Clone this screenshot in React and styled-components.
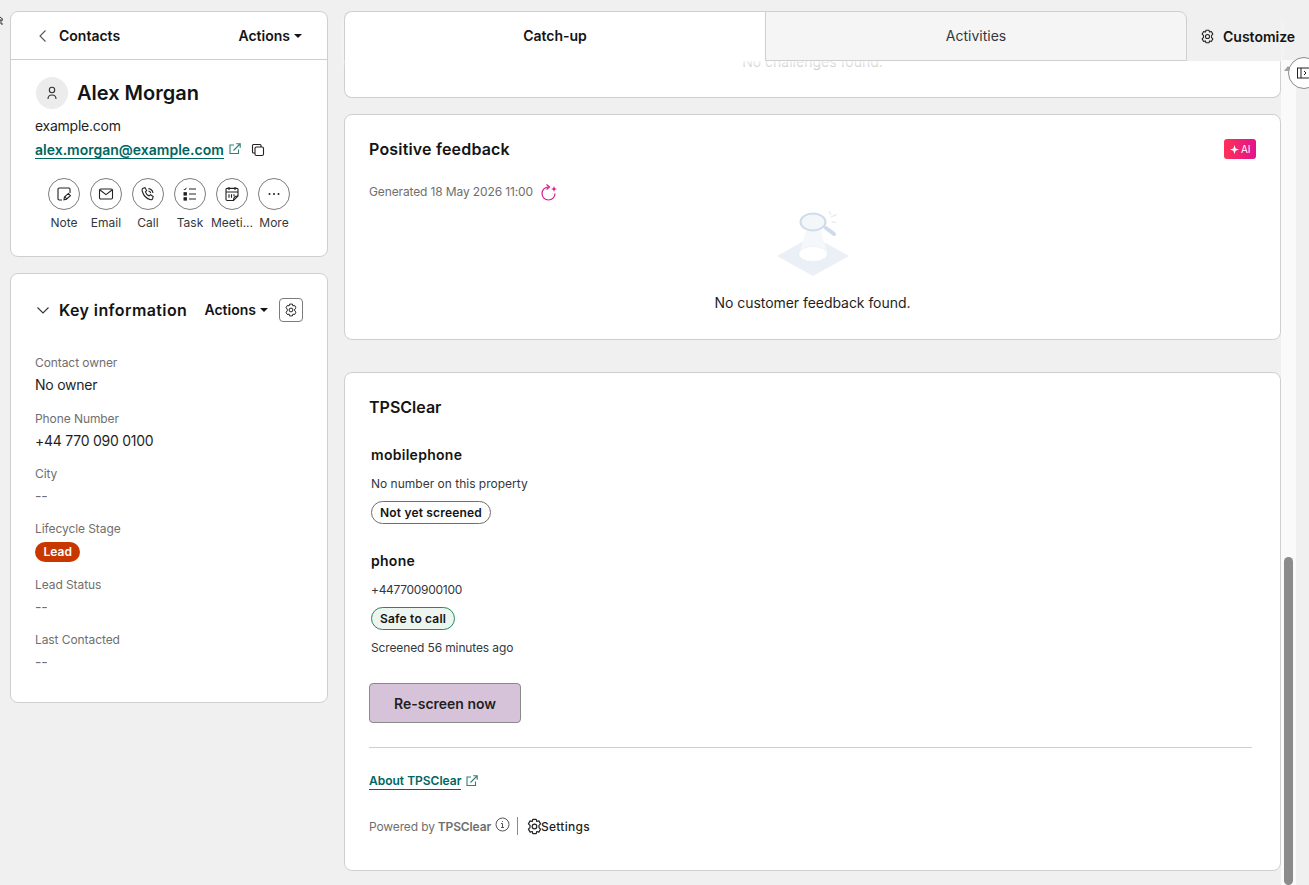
import React from 'react';
import styled, { createGlobalStyle } from 'styled-components';

const GlobalStyle = createGlobalStyle`
  html, body {
    margin: 0;
    padding: 0;
    height: 100%;
    overflow: hidden;
    background: #f0f0f0;
  }
  body {
    font-family: 'Inter', 'Open Sans', sans-serif;
    color: #1f1f1f;
  }
`;

const Page = styled.div`
  position: relative;
  display: flex;
  gap: 16px;
  width: 1309px;
  height: 885px;
  padding: 11px 0 0 10px;
  box-sizing: border-box;
  overflow: hidden;
`;

const Sidebar = styled.aside`
  display: flex;
  flex-direction: column;
  gap: 16px;
  width: 318px;
  flex-shrink: 0;
`;

const Panel = styled.section`
  background: #fff;
  border: 1px solid #cfcfcf;
  border-radius: 8px;
  box-sizing: border-box;
`;

const TopBar = styled.div`
  display: flex;
  align-items: center;
  justify-content: space-between;
  box-sizing: border-box;
  height: 48px;
  padding: 0 25px 0 24px;
  border-bottom: 1px solid #cfcfcf;
`;

const BackLink = styled.div`
  display: flex;
  align-items: center;
  gap: 8px;
  font-size: 14px;
  font-weight: 600;
  color: #141414;
`;

const ActionsMenu = styled.div`
  display: flex;
  align-items: center;
  gap: 4px;
  font-size: 14px;
  line-height: 20px;
  font-weight: 600;
  color: #141414;
  &::after {
    content: '';
    border-left: 4px solid transparent;
    border-right: 4px solid transparent;
    border-top: 4px solid #141414;
  }
`;

const Profile = styled.div`
  padding: 17px 24px 26px;
`;

const NameRow = styled.div`
  display: flex;
  align-items: center;
  gap: 9px;
`;

const Avatar = styled.div`
  display: flex;
  align-items: center;
  justify-content: center;
  width: 32px;
  height: 32px;
  margin-left: 1px;
  border-radius: 50%;
  background: #ececec;
`;

const Name = styled.h1`
  margin: 0;
  font-size: 20px;
  font-weight: 600;
  color: #141414;
`;

const Domain = styled.div`
  margin-top: 7px;
  font-size: 14px;
  line-height: 20px;
  letter-spacing: -0.25px;
`;

const EmailRow = styled.div`
  display: flex;
  align-items: center;
  margin-top: 4px;
  height: 20px;
`;

const TextLink = styled.a`
  color: #00665f;
  font-size: ${p => p.$size || 14}px;
  font-weight: 600;
  border-bottom: 1px solid #00665f;
  line-height: 16px;
`;

const LinkIcon = styled.span`
  display: inline-flex;
  margin-left: ${p => p.$gap || 5}px;
  margin-top: ${p => p.$lift ? -p.$lift : 0}px;
  color: ${p => p.$color || '#2f7f7a'};
`;

const QuickActions = styled.div`
  display: grid;
  grid-template-columns: repeat(6, 42px);
  justify-content: center;
  margin-top: 18px;
`;

const QuickAction = styled.div`
  display: flex;
  flex-direction: column;
  align-items: center;
  gap: 5px;
  font-size: 12px;
  color: #33383d;
  width: 42px;
`;

const RoundIcon = styled.div`
  display: flex;
  align-items: center;
  justify-content: center;
  width: 32px;
  height: 32px;
  border: 1px solid #7c7c7c;
  border-radius: 50%;
  box-sizing: border-box;
  color: #222;
`;

const InfoPanel = styled(Panel)`
  height: 430px;
  padding: 23px 24px 0;
`;

const InfoHeader = styled.div`
  display: flex;
  align-items: center;
  height: 26px;
`;

const InfoTitle = styled.h2`
  margin: 0 0 0 8px;
  font-size: 16px;
  font-weight: 600;
  letter-spacing: 0.4px;
  color: #141414;
  flex: 1;
`;

const SquareButton = styled.div`
  display: flex;
  align-items: center;
  justify-content: center;
  width: 24px;
  height: 24px;
  margin-left: 11px;
  border: 1px solid #7c7c7c;
  border-radius: 4px;
  box-sizing: border-box;
`;

const Fields = styled.div`
  display: flex;
  flex-direction: column;
  gap: 13.4px;
  margin-top: 31.2px;
`;

const Field = styled.div`
  display: flex;
  flex-direction: column;
  gap: 2px;
`;

const FieldLabel = styled.div`
  font-size: 12px;
  line-height: 18px;
  letter-spacing: -0.08px;
  color: #6f6f6f;
`;

const FieldValue = styled.div`
  font-size: 14px;
  line-height: 22px;
  letter-spacing: -0.25px;
  color: ${p => p.$muted ? '#6f6f6f' : '#1f1f1f'};
`;

const LeadBadge = styled.span`
  align-self: flex-start;
  margin-top: 2px;
  padding: 0 8.5px;
  background: #c93700;
  color: #fff;
  border-radius: 10px;
  font-size: 12px;
  font-weight: 600;
  line-height: 20px;
`;

const Content = styled.div`
  display: flex;
  flex-shrink: 0;
`;

const Main = styled.main`
  display: flex;
  flex-direction: column;
  width: 937px;
  flex-shrink: 0;
`;

const Tabs = styled.nav`
  position: relative;
  z-index: 2;
  display: flex;
  align-items: stretch;
  height: 50px;
  box-shadow: 0 5px 8px -2px rgba(255, 255, 255, 0.9);
`;

const Tab = styled.div`
  display: flex;
  align-items: center;
  justify-content: center;
  flex-shrink: 0;
  width: ${p => p.$active ? 421 : 422}px;
  box-sizing: border-box;
  border: 1px solid #cfcfcf;
  font-size: 14px;
  line-height: 20px;
  font-weight: ${p => p.$active ? 600 : 400};
  color: ${p => p.$active ? '#141414' : '#33383d'};
  background: ${p => p.$active ? '#fff' : '#f5f5f5'};
  border-bottom: ${p => p.$active ? '1px solid #fff' : '1px solid #cfcfcf'};
  border-radius: ${p => p.$active ? '8px 0 0 0' : '0 8px 0 0'};
  ${p => p.$active ? 'border-right: none;' : ''}
`;

const Customize = styled.div`
  display: flex;
  align-items: center;
  flex-shrink: 0;
  gap: 8px;
  padding-left: 13px;
  font-size: 14px;
  font-weight: 600;
  color: #141414;
  white-space: nowrap;
`;

const Stack = styled.div`
  display: flex;
  flex-direction: column;
`;

const ClippedCard = styled(Panel)`
  display: flex;
  justify-content: center;
  height: 37px;
  border-top: none;
  border-radius: 0 0 8px 8px;
  overflow: hidden;
  font-size: 14px;
  line-height: 20px;
  color: #c9c9c9;
`;

const ClippedText = styled.div`
  margin-top: -9px;
`;

const FeedbackCard = styled(Panel)`
  position: relative;
  height: 226px;
  margin-top: 16px;
  padding: 23px 24px 0;
`;

const CardTitle = styled.h3`
  margin: 0;
  font-size: 16px;
  line-height: 22px;
  font-weight: 600;
  letter-spacing: ${p => p.$spacing || 0}px;
  color: #141414;
`;

const AiBadge = styled.span`
  position: absolute;
  top: 24px;
  right: 24px;
  display: flex;
  align-items: center;
  gap: 2px;
  padding: 0 5.5px;
  height: 20px;
  border-radius: 3px;
  background: linear-gradient(90deg, #ff3157, #e0148c);
  color: #fff;
  font-size: 10px;
  font-weight: 400;
`;

const Generated = styled.div`
  display: flex;
  align-items: center;
  gap: 8px;
  margin-top: 23px;
  font-size: 12px;
  line-height: 18px;
  letter-spacing: -0.13px;
  color: #6f6f6f;
`;

const EmptyState = styled.div`
  display: flex;
  flex-direction: column;
  align-items: center;
  gap: 17px;
  margin-top: 8px;
  font-size: 14px;
  letter-spacing: -0.05px;
  color: #1f1f1f;
`;

const TpsCard = styled(Panel)`
  height: 499px;
  margin-top: 32px;
  padding: 23px 28px 24px 24px;
`;

const PhoneBlock = styled.div`
  display: flex;
  flex-direction: column;
  align-items: flex-start;
  margin: 27px 0 0 2px;
`;

const PhoneName = styled.div`
  font-size: 14px;
  line-height: 20px;
  font-weight: 600;
  letter-spacing: 0.28px;
  color: #141414;
`;

const SmallText = styled.div`
  margin-top: ${p => p.$top || 10}px;
  font-size: 12px;
  line-height: 18px;
  letter-spacing: ${p => p.$spacing || 0}px;
  color: #33383d;
`;

const Pill = styled.span`
  margin-top: 8px;
  padding: 0 8px;
  border: 1px solid ${p => p.$safe ? '#1f8a5b' : '#6f6f6f'};
  background: ${p => p.$safe ? '#edf5f0' : '#fff'};
  border-radius: 12px;
  font-size: 12px;
  line-height: 21px;
  font-weight: 600;
  letter-spacing: 0.18px;
  color: #141414;
`;

const ScreenButton = styled.button`
  display: block;
  width: 152px;
  height: 40px;
  margin-top: 26px;
  border: 1px solid #8a8a8a;
  border-radius: 4px;
  background: #d6c3d9;
  font-family: inherit;
  font-size: 14px;
  font-weight: 600;
  color: #1f1f1f;
`;

const Divider = styled.hr`
  margin: 24px 0 0;
  border: none;
  border-top: 1px solid #cfcfcf;
`;

const AboutRow = styled.div`
  display: flex;
  align-items: center;
  margin-top: 25px;
`;

const PoweredRow = styled.div`
  display: flex;
  align-items: center;
  margin-top: 27px;
  font-size: 12px;
  letter-spacing: -0.13px;
  color: #6f6f6f;
`;

const Strong = styled.span`
  margin-left: 3px;
  font-weight: 600;
`;

const Separator = styled.span`
  width: 1px;
  height: 18px;
  margin: 0 7.5px 0 7px;
  background: #8a8a8a;
`;

const SettingsLink = styled.span`
  display: flex;
  align-items: center;
  font-weight: 500;
  letter-spacing: 0.25px;
  color: #1f1f1f;
  svg {
    margin-right: -1.5px;
  }
`;

const Scrollbar = styled.div`
  position: relative;
  flex-shrink: 0;
  width: 15px;
  margin-top: 49px;
  height: 825px;
  background: #fafafa;
`;

const ScrollThumb = styled.div`
  position: absolute;
  left: 3px;
  right: 3px;
  bottom: 0;
  height: 328px;
  border-radius: 5px;
  background: #8b8b8b;
`;

const ScrollArrow = styled.div`
  position: absolute;
  top: 6px;
  left: 3px;
  border-left: 4px solid transparent;
  border-right: 4px solid transparent;
  border-bottom: 5px solid #a0a0a0;
`;

const CollapseButton = styled.div`
  position: absolute;
  top: 57px;
  left: 1288px;
  display: flex;
  align-items: center;
  padding-left: 8px;
  box-sizing: border-box;
  width: 32px;
  height: 32px;
  border: 1px solid #8a8a8a;
  border-radius: 50%;
  background: #fff;
`;

const CornerMark = styled.div`
  position: absolute;
  top: 14px;
  left: 0;
  line-height: 0;
`;

const Gear = ({ size = 16 }) => (
  <svg width={size} height={size} viewBox="1.5 0.5 13 14" fill="none" stroke="#222" strokeWidth="1" strokeLinejoin="round">
    <path d="M6.6 1.6h2.8l.5 1.8 1.7-.5 1.4 2.4-1.3 1.3v1.8l1.3 1.3-1.4 2.4-1.7-.5-.5 1.8H6.6l-.5-1.8-1.700.5L3 9.700l1.300-1.300V6.600L3 5.300l1.400-2.400 1.700.5z" />
    <circle cx="8" cy="7.500" r="1.900" />
  </svg>
);

const External = ({ size = 12 }) => (
  <svg width={size} height={size} viewBox="0 0 12 12" fill="none" stroke="currentColor" strokeWidth="1.100">
    <path d="M9.500 6.500v4h-8.500v-8.500h4" />
    <path d="M4.500 7.500 11 1M7.200 .8H11.200V4.800" />
  </svg>
);

const icons = {
  Note: (
    <svg width="16" height="16" viewBox="0 0 16 16" fill="none" stroke="#222" strokeWidth="1.100">
      <path d="M6 14H3.200C2.500 14 2 13.500 2 12.800V3.200C2 2.500 2.500 2 3.200 2h9.600c.7 0 1.200.5 1.200 1.200V7" />
      <path d="M8 13.800 8.400 11l4-3.600 2 2.200-4 3.600z" />
      <path d="M9 11.200l2 2" />
    </svg>
  ),
  Email: (
    <svg width="16" height="16" viewBox="0 0 16 16" fill="none" stroke="#222" strokeWidth="1.100">
      <rect x="1.500" y="3" width="13" height="10" rx="1.200" />
      <path d="M2 4l6 4.600L14 4" />
    </svg>
  ),
  Call: (
    <svg width="16" height="16" viewBox="0 0 16 16" fill="none" stroke="#222" strokeWidth="1.100">
      <path d="M3 2.200 5 1.600l1.600 3-1.200 1.200c.5 1.600 2 3.300 3.700 4.100l1.300-1.200 2.800 1.800-.6 2.200c-.3.8-1.200 1.200-2 1C6.600 12.700 3.400 9.400 2.200 5c-.3-1.200 0-2.400.8-2.800z" />
      <path d="M8.400 2.600c2.400.2 4.200 2 4.600 4.400M8.400 5c1.200.1 2.100 1 2.300 2.200" />
    </svg>
  ),
  Task: (
    <svg width="16" height="16" viewBox="0 0 16 16" fill="none" stroke="#222" strokeWidth="1">
      <path d="M1.800 3l1 1 1.600-2.200M7 3h7M7 8h7M7 13h7" />
      <rect x="2" y="6.700" width="2.400" height="2.400" fill="#222" />
      <rect x="2" y="11.700" width="2.400" height="2.400" fill="#222" />
    </svg>
  ),
  Meeting: (
    <svg width="16" height="16" viewBox="0 0 16 16" fill="none" stroke="#222" strokeWidth="1.100">
      <path d="M9.500 14.500H3.200c-.7 0-1.200-.5-1.200-1.200V3.600c0-.7.5-1.200 1.200-1.200h9.600c.7 0 1.200.5 1.200 1.200v6.400z" />
      <path d="M2 6h12M5 1v3M11 1v3M5 8.200v3.600M7.500 8.200v3.600M10 8.200v2M9.500 14.500c0-2.400 1.600-4.500 4.500-4.500" />
    </svg>
  ),
  More: (
    <svg width="16" height="16" viewBox="0 0 16 16" fill="#222">
      <circle cx="3.500" cy="8" r="1" />
      <circle cx="8" cy="8" r="1" />
      <circle cx="12.500" cy="8" r="1" />
    </svg>
  ),
};

const quickActions = [
  { label: 'Note', icon: icons.Note },
  { label: 'Email', icon: icons.Email },
  { label: 'Call', icon: icons.Call },
  { label: 'Task', icon: icons.Task },
  { label: 'Meeti...', icon: icons.Meeting },
  { label: 'More', icon: icons.More },
];

const fields = [
  { label: 'Contact owner', value: 'No owner' },
  { label: 'Phone Number', value: '+44 770 090 0100' },
  { label: 'City', value: '--', muted: true },
  { label: 'Lifecycle Stage', badge: 'Lead' },
  { label: 'Lead Status', value: '--', muted: true },
  { label: 'Last Contacted', value: '--', muted: true },
];

const EmptyIllustration = () => (
  <svg width="72" height="68" viewBox="0 0 72 68" fill="none">
    <path d="M36 27 0 47l36 20 36-20z" fill="#eaf0f6" />
    <path d="M29 22h15l7 24H22z" fill="#f5f8fb" />
    <ellipse cx="36" cy="45" rx="14" ry="7.500" fill="#fff" stroke="#dfe6ee" strokeDasharray="1 2" />
    <ellipse cx="36" cy="13" rx="12.500" ry="8.500" fill="#f4f7fa" stroke="#cfdbe8" strokeWidth="2" />
    <path d="M49 19l8 6" stroke="#cfdbe8" strokeWidth="4" strokeLinecap="round" />
    <path d="M52 2l2 4M54 8l6-2.700M55 12.700l4 1" stroke="#dfe6ee" strokeWidth="1" />
  </svg>
);

export default function App() {
  return (
    <Page>
      <GlobalStyle />
      <CornerMark>
        <svg width="4" height="12" viewBox="0 0 4 12" fill="none" stroke="#333" strokeWidth="1">
          <path d="M0 3l3 2.500M0 6h3M1 6v4h2" />
        </svg>
      </CornerMark>

      <Sidebar>
        <Panel>
          <TopBar>
            <BackLink>
              <svg width="16" height="16" viewBox="0 0 16 16" fill="none" stroke="#555" strokeWidth="1.100">
                <path d="M10.500 2.500 5 8l5.500 5.500" />
              </svg>
              Contacts
            </BackLink>
            <ActionsMenu>Actions</ActionsMenu>
          </TopBar>
          <Profile>
            <NameRow>
              <Avatar>
                <svg width="16" height="16" viewBox="0 0 16 16" fill="none" stroke="#333" strokeWidth="1.100">
                  <circle cx="8" cy="5" r="2.700" />
                  <path d="M4 14c0-2.800 1.500-4 4-4s4 1.200 4 4" />
                </svg>
              </Avatar>
              <Name>Alex Morgan</Name>
            </NameRow>
            <Domain>example.com</Domain>
            <EmailRow>
              <TextLink>alex.morgan@example.com</TextLink>
              <LinkIcon $lift={2}><External /></LinkIcon>
              <LinkIcon $gap={10} $color="#222">
                <svg width="14" height="14" viewBox="0 0 14 14" fill="none" stroke="currentColor" strokeWidth="1.100">
                  <rect x="4" y="4" width="8.500" height="8.500" rx="1.500" />
                  <path d="M4 10H2.500C1.800 10 1.500 9.500 1.500 9V2.500c0-.6.400-1 1-1H9c.6 0 1 .4 1 1V4" />
                </svg>
              </LinkIcon>
            </EmailRow>
            <QuickActions>
              {quickActions.map(action => (
                <QuickAction key={action.label}>
                  <RoundIcon>{action.icon}</RoundIcon>
                  {action.label}
                </QuickAction>
              ))}
            </QuickActions>
          </Profile>
        </Panel>

        <InfoPanel>
          <InfoHeader>
            <svg width="16" height="16" viewBox="0 0 16 16" fill="none" stroke="#333" strokeWidth="1.100">
              <path d="M2.500 5.500 8 11l5.500-5.500" />
            </svg>
            <InfoTitle>Key information</InfoTitle>
            <ActionsMenu>Actions</ActionsMenu>
            <SquareButton><Gear size={14} /></SquareButton>
          </InfoHeader>
          <Fields>
            {fields.map(field => (
              <Field key={field.label}>
                <FieldLabel>{field.label}</FieldLabel>
                {field.badge
                  ? <LeadBadge>{field.badge}</LeadBadge>
                  : <FieldValue $muted={field.muted}>{field.value}</FieldValue>}
              </Field>
            ))}
          </Fields>
        </InfoPanel>
      </Sidebar>

      <Content>
        <Main>
          <Tabs>
            <Tab $active>Catch-up</Tab>
            <Tab>Activities</Tab>
            <Customize><Gear size={15} />Customize</Customize>
          </Tabs>
          <Stack>
            <ClippedCard><ClippedText>No challenges found.</ClippedText></ClippedCard>
            <FeedbackCard>
              <CardTitle $spacing={0.18}>Positive feedback</CardTitle>
              <AiBadge>
                <svg width="9" height="9" viewBox="0 0 8 8" fill="#fff"><path d="M4 0l1 3 3 1-3 1-1 3-1-3-3-1 3-1z" /></svg>
                AI
              </AiBadge>
              <Generated>
                Generated 18 May 2026 11:00
                <svg width="17" height="17" viewBox="0 0 17 17" fill="none" stroke="#d6178f" strokeWidth="1.200">
                  <path d="M7.500 3A6.500 6.500 0 1 0 14 9.500" />
                  <path d="M5.500 .5 8.500 3 5.500 5.500" />
                  <path d="M13 2l.8 2.200 2.200.8-2.200.8L13 8l-.8-2.200L10 5l2.200-.8z" fill="#d6178f" stroke="none" />
                </svg>
              </Generated>
              <EmptyState>
                <EmptyIllustration />
                No customer feedback found.
              </EmptyState>
            </FeedbackCard>
            <TpsCard>
              <CardTitle>TPSClear</CardTitle>
              <PhoneBlock>
                <PhoneName>mobilephone</PhoneName>
                <SmallText>No number on this property</SmallText>
                <Pill>Not yet screened</Pill>
              </PhoneBlock>
              <PhoneBlock>
                <PhoneName>phone</PhoneName>
                <SmallText $spacing={-0.3}>+447700900100</SmallText>
                <Pill $safe>Safe to call</Pill>
                <SmallText $top={9} $spacing={-0.13}>Screened 56 minutes ago</SmallText>
              </PhoneBlock>
              <ScreenButton>Re-screen now</ScreenButton>
              <Divider />
              <AboutRow>
                <TextLink $size={12}>About TPSClear</TextLink>
                <LinkIcon $lift={2}><External /></LinkIcon>
              </AboutRow>
              <PoweredRow>
                Powered by <Strong>TPSClear</Strong>
                <LinkIcon $gap={4} $lift={3} $color="#555">
                  <svg width="15" height="15" viewBox="0 0 15 15" fill="none" stroke="currentColor" strokeWidth="1">
                    <circle cx="7.500" cy="7.500" r="6.500" />
                    <path d="M6 6.500h1.500v4M6 10.500h3M7.500 4v.8" />
                  </svg>
                </LinkIcon>
                <Separator />
                <SettingsLink><Gear size={17} />Settings</SettingsLink>
              </PoweredRow>
            </TpsCard>
          </Stack>
        </Main>

        <Scrollbar>
          <ScrollArrow />
          <ScrollThumb />
        </Scrollbar>
      </Content>

      <CollapseButton>
        <svg width="14" height="12" viewBox="0 0 14 12" fill="none" stroke="#222" strokeWidth="1">
          <rect x="0.500" y="1" width="13" height="10" />
          <path d="M4 1v10M7 4l2 2-2 2" />
        </svg>
      </CollapseButton>
    </Page>
  );
}
